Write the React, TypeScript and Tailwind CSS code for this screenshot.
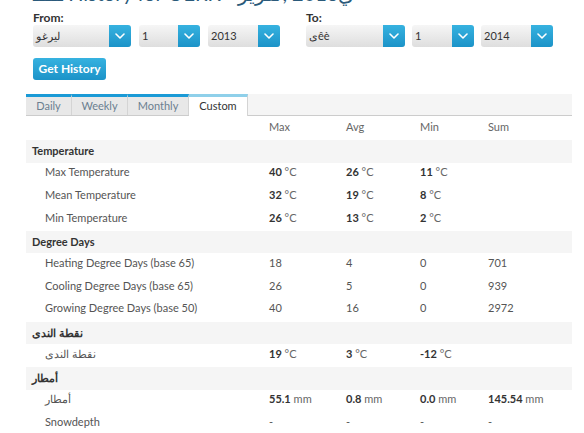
import React from 'react';

const font = { fontFamily: 'Lato, "Noto Sans", "Liberation Sans", sans-serif' };

const Chevron = () => (
  <svg width="10" height="6" viewBox="0 0 10 6" fill="none">
    <path d="M1 1l4 4 4-4" stroke="white" strokeWidth="1.6" strokeLinecap="round" strokeLinejoin="round" />
  </svg>
);

const Select = ({ value, width }: { value: string; width: string }) => (
  <div className={`flex h-[22px] ${width} rounded-[3px] overflow-hidden bg-gradient-to-b from-[#f6f6f6] to-[#dedede]`}>
    <div className="flex-1 flex items-center pl-[3px] text-[11px] text-[#333]">{value}</div>
    <div className="w-[22px] flex items-center justify-center bg-gradient-to-b from-[#36b2e0] to-[#1b93c8]">
      <Chevron />
    </div>
  </div>
);

type Val = { n: string; u?: string };

const Cell = ({ v }: { v?: Val }) => (
  <div className="pl-[6px] flex items-center">
    {v && (
      <span>
        <span className={v.u ? 'font-bold text-[#333]' : 'text-[#555]'}>{v.n}</span>
        {v.u && <span className="text-[#666]"> {v.u}</span>}
      </span>
    )}
  </div>
);

const Section = ({ title }: { title: string }) => (
  <div className="grid grid-cols-[237px_77px_74px_68px_1fr] h-[22.7px] bg-[#f5f5f5]">
    <div className="pl-[6px] flex items-center font-bold text-[#333]">{title}</div>
  </div>
);

const Row = ({ label, vals }: { label: string; vals: (Val | undefined)[] }) => (
  <div className="grid grid-cols-[237px_77px_74px_68px_1fr] h-[22.7px]">
    <div className="pl-[19px] flex items-center text-[#555]">{label}</div>
    {vals.map((v, i) => (
      <Cell key={i} v={v} />
    ))}
    <div />
  </div>
);

const c = (n: string): Val => ({ n, u: '°C' });
const mm = (n: string): Val => ({ n, u: 'mm' });
const p = (n: string): Val => ({ n });

export default function App() {
  return (
    <div className="w-[584px] h-[433px] overflow-hidden bg-white relative" style={font}>
      <div className="absolute left-[33px] top-[-19px] text-[20px] leading-[24px] text-[#2a5a7a] whitespace-nowrap">
        <span>ـــــ</span> <span>History for OERK - </span>
        <span dir="rtl">ي2013 ,تقرير</span>
      </div>
      <div className="pt-[10px] pl-[33px] flex gap-[26px]">
        <div>
          <div className="text-[12px] font-bold text-[#333] leading-[15px]">From:</div>
          <div className="flex gap-[8px]">
            <Select value="ليرغو" width="w-[98px]" />
            <Select value="1" width="w-[61px]" />
            <Select value="2013" width="w-[72px]" />
          </div>
        </div>
        <div>
          <div className="text-[12px] font-bold text-[#333] leading-[15px]">To:</div>
          <div className="flex gap-[7px]">
            <Select value="ىêè" width="w-[99px]" />
            <Select value="1" width="w-[62px]" />
            <Select value="2014" width="w-[72px]" />
          </div>
        </div>
      </div>
      <div className="pl-[33px] mt-[11px] flex">
        <button className="h-[22px] w-[73px] rounded-[3px] bg-gradient-to-b from-[#36b2e0] to-[#1b93c8] text-white text-[12px] font-bold">
          Get History
        </button>
      </div>
      <div className="ml-[26px] w-[546px] mt-[14px]">
        <div className="flex h-[22px] bg-[#f5f5f5] border-b border-[#cccccc] text-[11px]">
          {['Daily', 'Weekly', 'Monthly'].map((t, i) => (
            <div
              key={t}
              className={`flex items-center justify-center bg-[#e8e8e8] border-t-[3px] border-t-[#1a9ad6] border-r border-r-[#d4d4d4] text-[#6b7f90] ${
                ['w-[46px]', 'w-[56px]', 'w-[61px]'][i]
              }`}
            >
              {t}
            </div>
          ))}
          <div className="w-[59px] flex items-center justify-center bg-white border-t-[3px] border-t-[#8fd0ea] border-r border-r-[#d4d4d4] text-[#333] mb-[-1px]">
            Custom
          </div>
        </div>
        <div className="text-[11px]">
          <div className="grid grid-cols-[237px_77px_74px_68px_1fr] h-[24px] pb-[2px] text-[#666]">
            <div />
            <div className="pl-[6px] flex items-center">Max</div>
            <div className="pl-[6px] flex items-center">Avg</div>
            <div className="pl-[6px] flex items-center">Min</div>
            <div className="pl-[6px] flex items-center">Sum</div>
          </div>
          <Section title="Temperature" />
          <Row label="Max Temperature" vals={[c('40'), c('26'), c('11'), undefined]} />
          <Row label="Mean Temperature" vals={[c('32'), c('19'), c('8'), undefined]} />
          <Row label="Min Temperature" vals={[c('26'), c('13'), c('2'), undefined]} />
          <Section title="Degree Days" />
          <Row label="Heating Degree Days (base 65)" vals={[p('18'), p('4'), p('0'), p('701')]} />
          <Row label="Cooling Degree Days (base 65)" vals={[p('26'), p('5'), p('0'), p('939')]} />
          <Row label="Growing Degree Days (base 50)" vals={[p('40'), p('16'), p('0'), p('2972')]} />
          <Section title="نقطة الندى" />
          <Row label="نقطة الندى" vals={[c('19'), c('3'), c('-12'), undefined]} />
          <Section title="أمطار" />
          <Row label="أمطار" vals={[mm('55.1'), mm('0.8'), mm('0.0'), mm('145.54')]} />
          <Row label="Snowdepth" vals={[p('-'), p('-'), p('-'), p('-')]} />
        </div>
      </div>
    </div>
  );
}
